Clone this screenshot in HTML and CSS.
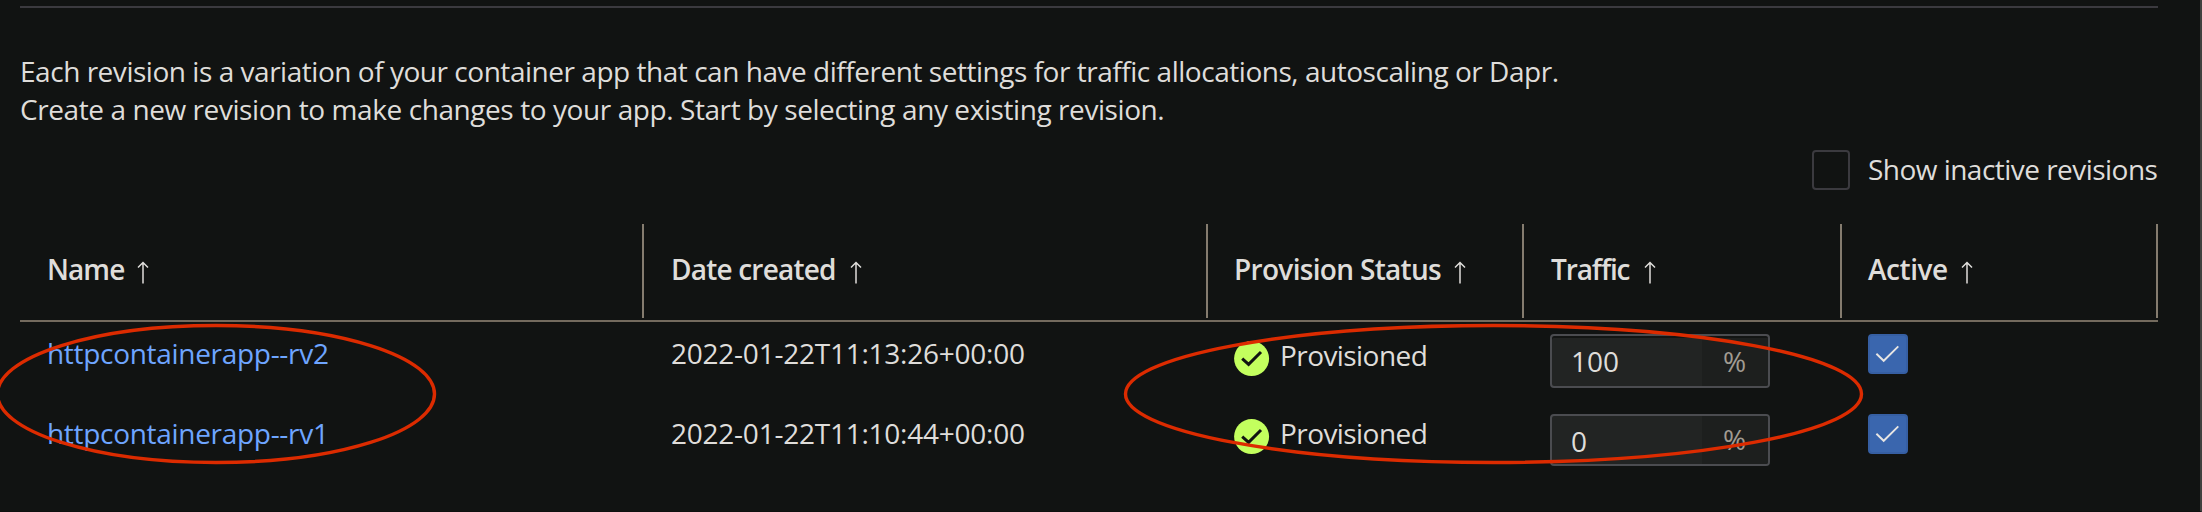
FILE: index.html
```html
<!DOCTYPE html>
<html lang="en">
<head>
<meta charset="utf-8">
<title>Revision management</title>
<link rel="stylesheet" href="styles.css">
</head>
<body>
<svg class="defs" width="0" height="0">
  <symbol id="arrow" viewBox="0 0 12 23"><path d="M6 22.5V1.5M1 6.5 6 1.5l5 5" fill="none" stroke="#dfddda" stroke-width="1.5"/></symbol>
  <symbol id="ok" viewBox="0 0 36 36"><circle cx="17.6" cy="17.6" r="17.5" fill="#c3ff5e"/><path d="M8.2 17.6 14.6 23.4 27 11" fill="none" stroke="#111312" stroke-width="3"/></symbol>
  <symbol id="tick" viewBox="0 0 40 40"><path d="M8.4 19.8 15.7 26.8 30.3 12.4" fill="none" stroke="#e8e6e3" stroke-width="1.9"/></symbol>
</svg>
<main class="panel">
  <div class="rule"></div>
  <div class="intro">
    <p class="intro-first">Each revision is a variation of your container app that can have different settings for traffic allocations, autoscaling or Dapr.</p>
    <p class="intro-second">Create a new revision to make changes to your app. Start by selecting any existing revision.</p>
  </div>
  <label class="filter"><span class="box"></span><span class="filter-label">Show inactive revisions</span></label>
  <div class="grid head">
    <div class="th th-name"><span>Name</span><svg class="arrow"><use href="#arrow"/></svg></div>
    <div class="th th-date"><span>Date created</span><svg class="arrow"><use href="#arrow"/></svg></div>
    <div class="th th-status"><span>Provision Status</span><svg class="arrow"><use href="#arrow"/></svg></div>
    <div class="th th-traffic"><span>Traffic</span><svg class="arrow"><use href="#arrow"/></svg></div>
    <div class="th th-active"><span>Active</span><svg class="arrow"><use href="#arrow"/></svg></div>
  </div>
  <div class="grid row row-first">
    <div class="td name"><a class="link">httpcontainerapp--rv2</a></div>
    <div class="td date">2022-01-22T11:13:26+00:00</div>
    <div class="td status"><svg class="ok"><use href="#ok"/></svg><span>Provisioned</span></div>
    <div class="td"><div class="field"><span class="value">100</span><span class="suffix">%</span></div></div>
    <div class="td"><span class="checked"><svg class="tick"><use href="#tick"/></svg></span></div>
  </div>
  <div class="grid row row-last">
    <div class="td name"><a class="link">httpcontainerapp--rv1</a></div>
    <div class="td date">2022-01-22T11:10:44+00:00</div>
    <div class="td status"><svg class="ok"><use href="#ok"/></svg><span>Provisioned</span></div>
    <div class="td"><div class="field"><span class="value">0</span><span class="suffix">%</span></div></div>
    <div class="td"><span class="checked"><svg class="tick"><use href="#tick"/></svg></span></div>
  </div>
</main>
<svg class="marks" viewBox="0 0 2202 512">
  <ellipse cx="216" cy="394" rx="218.5" ry="68.5"/>
  <ellipse cx="1493.5" cy="394" rx="368" ry="68.5"/>
</svg>
</body>
</html>
```
FILE: styles.css
```css
* { box-sizing: border-box; }
body {
  margin: 0;
  background: #111312;
  color: #dfddda;
  font: 400 28px/38px "Open Sans", "Noto Sans", sans-serif;
  overflow: hidden;
}
.defs { display: none; }
.panel {
  width: 2202px;
  height: 512px;
  padding: 6px 42px 0 20px;
  border-right: 2px solid #40413f;
  border-bottom: 1px solid #0e0f0f;
}
.rule { width: 2138px; height: 2px; background: #3b3a3f; }
.intro { margin-top: 44px; }
.intro p { margin: 0; white-space: nowrap; }
.intro-first { letter-spacing: -0.468px; }
.intro-second { letter-spacing: -0.42px; }
.filter {
  display: flex;
  height: 40px;
  margin: 22px 0 0 1792px;
}
.box {
  width: 38px;
  height: 40px;
  border: 2px solid #3b3a3f;
  border-radius: 4px;
}
.filter-label {
  margin-left: 18px;
  letter-spacing: -0.53px;
  white-space: nowrap;
}
.grid {
  display: grid;
  grid-template-columns: 624px 564px 316px 318px 316px;
  width: 2138px;
}
.head {
  height: 98px;
  margin-top: 34px;
  border-bottom: 2px solid #746b5e;
  font-weight: 600;
}
.th {
  display: flex;
  height: 94px;
  padding: 26px 0 0 26px;
  border-right: 2px solid #857c6f;
  white-space: nowrap;
}
.arrow { width: 12px; height: 23px; margin: 11px 0 0 14px; }
.th-name { padding-left: 27px; letter-spacing: -0.9px; }
.th-name .arrow { margin-left: 13px; }
.th-date { padding-left: 27px; letter-spacing: -0.8px; }
.th-status { letter-spacing: -0.68px; }
.th-status .arrow { margin-left: 13px; }
.th-traffic { padding-left: 27px; letter-spacing: -1.1px; }
.th-traffic .arrow { margin-left: 15px; }
.th-active { letter-spacing: -0.45px; }
.th-active .arrow { margin-left: 13px; }
.row { height: 80px; }
.td { padding: 12px 0 0 26px; white-space: nowrap; }
.name { padding-left: 27px; }
.link { color: #6ea5ff; letter-spacing: -0.3px; }
.date { padding-left: 27px; letter-spacing: -0.237px; }
.status { display: flex; letter-spacing: -0.57px; }
.row-first .status { padding-top: 14px; }
.ok { width: 36px; height: 36px; margin: 5px 10px 0 0; }
.field {
  display: flex;
  width: 220px;
  height: 54px;
  border: 2px solid #4b4c50;
  border-radius: 4px;
  background: #222423;
  overflow: hidden;
}
.row-first .field { box-shadow: inset 0 2px #131514; }
.row-last .field { height: 52px; }
.value { flex: 1; padding: 6px 0 0 19px; }
.suffix {
  width: 66px;
  margin-top: 2px;
  padding: 4px 0 0 21px;
  background: #1d1f1e;
  color: #a19b92;
}
.row-last .suffix { margin-top: 0; }
.checked {
  display: block;
  width: 40px;
  height: 40px;
  border: 2px solid #365fa3;
  border-radius: 4px;
  background: #3a66ae;
}
.tick { display: block; width: 40px; height: 40px; margin: -2px; }
/* Callout ellipses over the table */
.marks {
  position: absolute;
  left: 0;
  top: 0;
  width: 2202px;
  height: 512px;
  fill: none;
  stroke: #dc2b00;
  stroke-width: 3.4px;
}
```
